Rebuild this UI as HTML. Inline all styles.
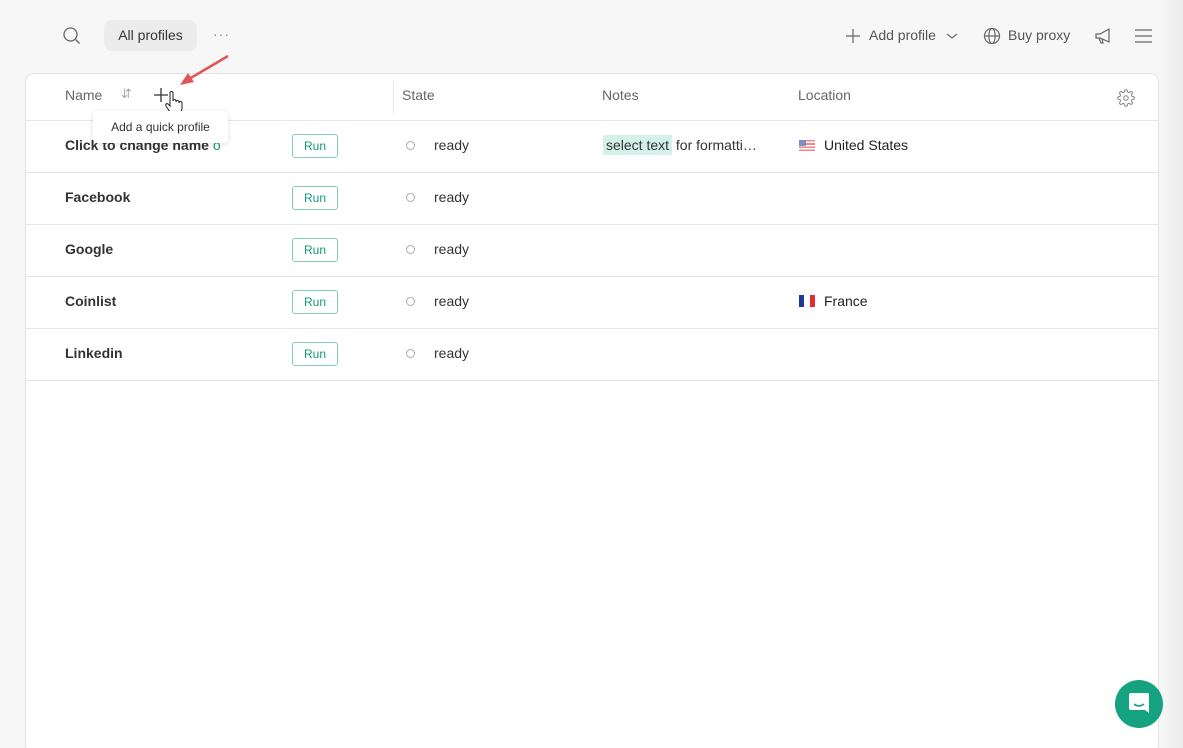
<!DOCTYPE html>
<html><head><style>
*{box-sizing:border-box;margin:0;padding:0}
html,body{width:1183px;height:748px;overflow:hidden}
body{background:#f7f7f7;font-family:"Liberation Sans",sans-serif;position:relative;color:#222}
.abs{position:absolute}
.top{font-size:14px;color:#555}
.card{position:absolute;left:25px;top:73px;width:1134px;height:680px;background:#fff;border:1px solid #e2e2e2;border-radius:8px}
.hd{font-size:14px;color:#666;position:absolute;top:87px}
.row{position:absolute;left:26px;width:1132px;height:52px;border-bottom:1px solid #e6e6e6}
.nm{position:absolute;left:39px;top:16px;font-size:14px;font-weight:bold;color:#333}
.run{position:absolute;left:266px;top:13px;width:46px;height:24px;border:1px solid #7fd1b9;border-radius:3px;color:#16997a;font-size:12px;text-align:center;line-height:22px}
.dot{position:absolute;left:380px;top:20px;width:9px;height:9px;border:1px solid #aaa;border-radius:50%}
.st{position:absolute;left:408px;top:16px;font-size:14px;color:#333}
.loc{position:absolute;left:773px;top:16px;font-size:14px;color:#222}
</style></head><body>
<svg class="abs" style="left:62px;top:26px" width="20" height="20" viewBox="0 0 20 20"><circle cx="8.5" cy="8.5" r="6.5" fill="none" stroke="#666" stroke-width="1.3"/><line x1="13.5" y1="13.5" x2="17.5" y2="17.5" stroke="#666" stroke-width="1.3"/></svg>
<div class="abs top" style="left:104px;top:20px;width:93px;height:31px;background:#ececec;border-radius:8px;line-height:31px;text-align:center;color:#333">All profiles</div>
<div class="abs" style="left:213px;top:26px;color:#888;font-size:14px;letter-spacing:1px">···</div>
<svg class="abs" style="left:845px;top:28px" width="16" height="16"><path d="M8 1v14M1 8h14" stroke="#666" stroke-width="1.2"/></svg>
<div class="abs top" style="left:869px;top:27px">Add profile</div>
<svg class="abs" style="left:946px;top:32px" width="12" height="8"><path d="M1 2l5 4 5-4" fill="none" stroke="#666" stroke-width="1.2"/></svg>
<svg class="abs" style="left:983px;top:27px" width="18" height="18" viewBox="0 0 18 18" fill="none" stroke="#666" stroke-width="1.2"><circle cx="9" cy="9" r="7.5"/><ellipse cx="9" cy="9" rx="3.2" ry="7.5"/><path d="M1.5 9h15"/></svg>
<div class="abs top" style="left:1008px;top:27px">Buy proxy</div>
<svg class="abs" style="left:1094px;top:27px" width="18" height="18" fill="none" stroke="#666" stroke-width="1.2"><path d="M2 7h4l9-5v13l-9-4H2zM5 11l2 5h2l-1-4"/></svg>
<svg class="abs" style="left:1135px;top:28px" width="17" height="16" stroke="#666" stroke-width="1.2"><path d="M0 2h17M0 8h17M0 14h17"/></svg>
<div class="card"></div>
<div class="abs" style="left:26px;top:120px;width:1132px;border-top:1px solid #e6e6e6"></div>
<div class="hd" style="left:65px">Name</div>
<div class="abs" style="left:121px;top:86px;color:#aaa;font-size:13px">⇵</div>
<svg class="abs" style="left:153px;top:87px" width="16" height="16"><path d="M8 1v14M1 8h14" stroke="#333" stroke-width="1.3"/></svg>
<svg class="abs" style="left:178px;top:54px" width="52" height="34"><path d="M50 2L6 28" stroke="#e05555" stroke-width="2.5"/><path d="M2 31l14-3-6-9z" fill="#e05555"/></svg>
<svg class="abs" style="left:164px;top:90px" width="20" height="26"><path d="M6 3c0-2 3-2 3 0v8c0-2 3-2 3 0v1c0-2 3-2 3 0v1c0-2 3-2 3 0v5c0 4-3 6-6 6h-2c-3 0-4-2-6-5l-2-3c-1-2 1-3 2-2l2 2z" fill="#fff" stroke="#333" stroke-width="1.1"/></svg>
<div class="abs" style="left:393px;top:81px;height:32px;border-left:1px solid #e6e6e6"></div>
<div class="hd" style="left:402px">State</div>
<div class="hd" style="left:602px">Notes</div>
<div class="hd" style="left:798px">Location</div>
<svg class="abs" style="left:1117px;top:89px" width="18" height="18" viewBox="0 0 24 24" fill="none" stroke="#888" stroke-width="1.4"><circle cx="12" cy="12" r="3"/><path d="M19.4 15a1.7 1.7 0 0 0 .3 1.8l.1.1a2 2 0 1 1-2.8 2.8l-.1-.1a1.7 1.7 0 0 0-2.9 1.2V21a2 2 0 1 1-4 0v-.1a1.7 1.7 0 0 0-2.9-1.2l-.1.1a2 2 0 1 1-2.8-2.8l.1-.1A1.7 1.7 0 0 0 3.1 14H3a2 2 0 1 1 0-4h.1a1.7 1.7 0 0 0 1.2-2.9l-.1-.1a2 2 0 1 1 2.8-2.8l.1.1A1.7 1.7 0 0 0 10 3.1V3a2 2 0 1 1 4 0v.1a1.7 1.7 0 0 0 2.9 1.2l.1-.1a2 2 0 1 1 2.8 2.8l-.1.1a1.7 1.7 0 0 0 1.2 2.9H21a2 2 0 1 1 0 4h-.1a1.7 1.7 0 0 0-1.5 1z"/></svg>

<div class="row" style="top:121px"><div class="nm">Click to change name <span style="color:#16997a;font-weight:normal">o</span></div><div class="run">Run</div><div class="dot"></div><div class="st">ready</div>
<div class="abs" style="left:577px;top:16px;font-size:14px;color:#333"><span style="background:#d3f1e8;padding:2px 3px">select text</span> for formatti…</div>
<div class="loc"><span style="display:inline-block;width:16px;height:11px;vertical-align:-1px;margin-right:9px;background:repeating-linear-gradient(#e88 0 1.6px,#fff 1.6px 3.2px);position:relative"><span style="position:absolute;left:0;top:0;width:7px;height:6px;background:#7a8fc6"></span></span>United States</div></div>
<div class="row" style="top:173px"><div class="nm">Facebook</div><div class="run">Run</div><div class="dot"></div><div class="st">ready</div></div>
<div class="row" style="top:225px"><div class="nm">Google</div><div class="run">Run</div><div class="dot"></div><div class="st">ready</div></div>
<div class="row" style="top:277px"><div class="nm">Coinlist</div><div class="run">Run</div><div class="dot"></div><div class="st">ready</div>
<div class="loc"><span style="display:inline-block;width:16px;height:12px;vertical-align:-1px;margin-right:9px;background:linear-gradient(90deg,#1b3a9b 0 5px,#fff 5px 11px,#e52b33 11px)"></span>France</div></div>
<div class="row" style="top:329px"><div class="nm">Linkedin</div><div class="run">Run</div><div class="dot"></div><div class="st">ready</div></div>

<div class="abs" style="left:93px;top:111px;width:135px;height:32px;background:#fff;border-radius:4px;box-shadow:0 1px 6px rgba(0,0,0,.12);font-size:12px;color:#333;text-align:center;line-height:32px">Add a quick profile</div>
<div class="abs" style="left:1159px;top:0;width:24px;height:748px;background:linear-gradient(90deg,#f7f7f7,#ececec)"></div>
<div class="abs" style="left:1115px;top:680px;width:48px;height:48px;border-radius:50%;background:#14a281"></div>
<svg class="abs" style="left:1128px;top:692px" width="22" height="24"><path d="M3 1h16a2 2 0 0 1 2 2v18l-4-3H3a2 2 0 0 1-2-2V3a2 2 0 0 1 2-2z" fill="#fff"/><path d="M6 12q5 4 10 0" stroke="#14a281" stroke-width="1.5" fill="none"/></svg>
</body></html>
